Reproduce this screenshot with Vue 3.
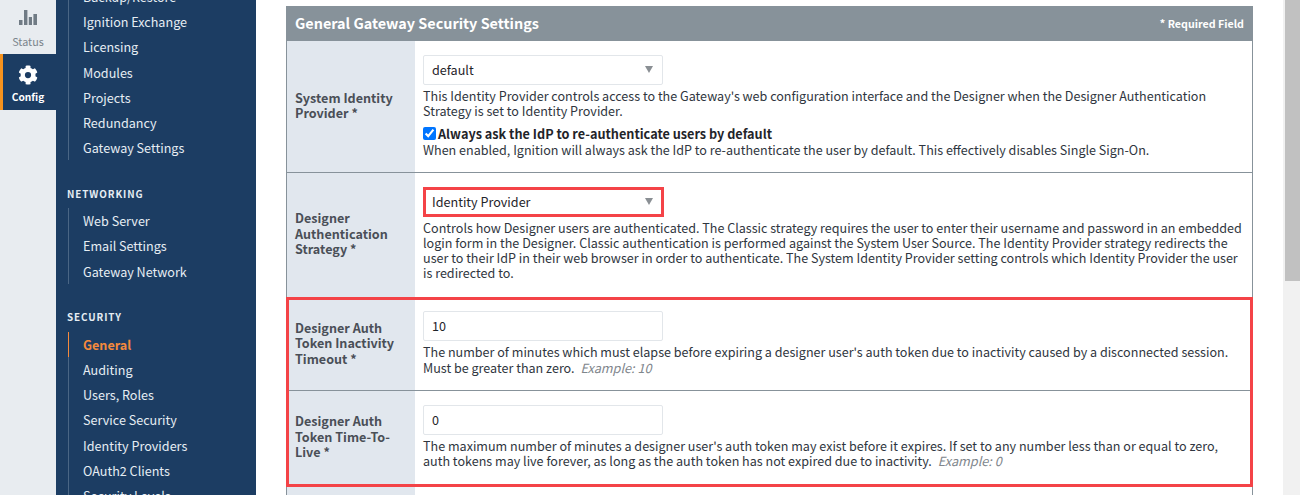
<script setup>
const groups = [
  { title: null, shift: true, items: ['Backup/Restore', 'Ignition Exchange', 'Licensing', 'Modules', 'Projects', 'Redundancy', 'Gateway Settings'] },
  { title: 'NETWORKING', items: ['Web Server', 'Email Settings', 'Gateway Network'] },
  { title: 'SECURITY', items: ['General', 'Auditing', 'Users, Roles', 'Service Security', 'Identity Providers', 'OAuth2 Clients', 'Security Levels'] },
]
</script>

<template>
  <div class="page">
    <aside class="rail">
      <a class="rail-item">
        <svg class="rail-icon" width="18" height="15" viewBox="0 0 18 15"><path d="M0 10h3.5v5H0zM5 0h3.4v15H5zM9.8 7h3.2v8H9.8zM14.4 4H18v11h-3.6z" fill="#707b85"/></svg>
        <span>Status</span>
      </a>
      <a class="rail-item active">
        <svg class="rail-icon" width="20" height="20" viewBox="0 0 512 512"><path fill="#fff" d="M487 316l-42-25a192 192 0 0 0 0-70l42-25c5-3 7-9 5-14-11-35-30-67-54-93-4-4-10-5-15-2l-42 24a188 188 0 0 0-61-35V28c0-6-4-10-9-11-36-8-73-8-107 0-5 1-9 5-9 11v48c-22 8-43 20-60 35L93 87c-5-3-11-2-15 2-24 26-43 58-54 93-2 5 0 11 5 14l42 25a192 192 0 0 0 0 70l-42 25c-5 3-7 9-5 14 11 35 30 67 54 93 4 4 10 5 15 2l42-24c17 15 38 27 60 35v48c0 6 4 10 9 11 36 8 73 8 107 0 5-1 9-5 9-11v-48c22-8 43-20 61-35l42 24c5 3 11 2 15-2 24-26 43-58 54-93 2-5 0-11-5-14zM256 336a80 80 0 1 1 0-160 80 80 0 0 1 0 160z"/></svg>
        <span>Config</span>
      </a>
    </aside>

    <nav class="side">
      <section v-for="g in groups" :key="g.items[0]" class="group" :class="{ shifted: g.shift }">
        <h4 v-if="g.title">{{ g.title }}</h4>
        <ul>
          <li v-for="it in g.items" :key="it" :class="{ current: it === 'General' }">{{ it }}</li>
        </ul>
      </section>
    </nav>

    <main class="main">
      <div class="panel">
        <header class="panel-head">
          <h2>General Gateway Security Settings</h2>
          <span>* Required Field</span>
        </header>

        <div class="row r1">
          <div class="label">System Identity Provider *</div>
          <div class="cell">
            <div class="select-wrap">
              <select><option>default</option></select>
              <i class="caret"></i>
            </div>
            <p class="help">This Identity Provider controls access to the Gateway's web configuration interface and the Designer when the Designer Authentication Strategy is set to Identity Provider.</p>
            <label class="check"><input type="checkbox" checked /> <b>Always ask the IdP to re-authenticate users by default</b></label>
            <p class="help">When enabled, Ignition will always ask the IdP to re-authenticate the user by default. This effectively disables Single Sign-On.</p>
          </div>
        </div>

        <div class="row r2">
          <div class="label">Designer Authentication Strategy *</div>
          <div class="cell">
            <div class="select-wrap marked">
              <select><option>Identity Provider</option></select>
              <i class="caret"></i>
            </div>
            <p class="help">Controls how Designer users are authenticated. The Classic strategy requires the user to enter their username and password in an embedded login form in the Designer. Classic authentication is performed against the System User Source. The Identity Provider strategy redirects the user to their IdP in their web browser in order to authenticate. The System Identity Provider setting controls which Identity Provider the user is redirected to.</p>
          </div>
        </div>

        <div class="row r3">
          <div class="label">Designer Auth Token Inactivity Timeout *</div>
          <div class="cell">
            <input class="field" type="text" value="10" />
            <p class="help">The number of minutes which must elapse before expiring a designer user's auth token due to inactivity caused by a disconnected session. Must be greater than zero. <em>Example: 10</em></p>
          </div>
        </div>

        <div class="row r4">
          <div class="label">Designer Auth Token Time-To-Live *</div>
          <div class="cell">
            <input class="field" type="text" value="0" />
            <p class="help">The maximum number of minutes a designer user's auth token may exist before it expires. If set to any number less than or equal to zero, auth tokens may live forever, as long as the auth token has not expired due to inactivity. <em>Example: 0</em></p>
          </div>
        </div>

        <div class="row r5">
          <div class="label"></div>
          <div class="cell"></div>
        </div>

        <div class="callout"></div>
      </div>
    </main>

    <div class="scrollbar"><div class="thumb"></div></div>
  </div>
</template>

<style scoped>
.page {
  display: flex;
  width: 1300px;
  height: 495px;
  overflow: hidden;
  background: #fff;
  font-family: "Noto Sans CJK SC", "Noto Sans", sans-serif;
  font-size: 12.6px;
  color: #2f3640;
}

.rail {
  flex: 0 0 56px;
  background: #e8ecf0;
  display: flex;
  flex-direction: column;
}
.rail-item {
  height: 56px;
  display: flex;
  flex-direction: column;
  align-items: center;
  color: #7b858c;
  font-size: 10.8px;
  line-height: 16px;
  padding-top: 10px;
  box-sizing: border-box;
}
.rail-item:first-child { height: 54px; }
.rail-icon { display: block; margin-bottom: 8px; }
.rail-item.active {
  background: #1c3d63;
  color: #fff;
  font-weight: 700;
  font-size: 10.2px;
  box-shadow: inset 3px 0 0 #f7931e;
  padding-top: 11px;
}
.rail-item.active .rail-icon { margin-bottom: 4px; }

.side {
  flex: 0 0 200px;
  background: #1c3d63;
  color: #e6edf3;
}
.group { padding: 0 0 0 11px; }
.group.shifted { margin-top: -16px; }
.group h4 {
  margin: 25.2px 0 6.8px;
  font-size: 9.9px;
  line-height: 16px;
  font-weight: 700;
  letter-spacing: 0.9px;
  color: #e6edf3;
}
.group ul {
  list-style: none;
  margin: 0;
  padding: 0 0 0 1px;
}
.group li {
  height: 25.2px;
  line-height: 25.2px;
  padding-left: 14px;
  border-left: 1px solid #4a6685;
}
.group li.current {
  color: #f58a3c;
  font-weight: 700;
  border-left-color: #f58a3c;
}

.main {
  flex: 1;
  padding: 6px 30px 0;
  min-width: 0;
}
.panel { position: relative; }
.panel-head {
  height: 35px;
  background: #87929a;
  color: #fff;
  display: flex;
  align-items: center;
  justify-content: space-between;
  padding: 0 9px 2px;
  box-sizing: border-box;
}
.panel-head h2 {
  margin: 0;
  font-size: 14.4px;
  font-weight: 700;
}
.panel-head span {
  font-size: 10.7px;
  font-weight: 700;
  padding-top: 2px;
}

.row {
  display: grid;
  grid-template-columns: 128px 1fr;
  border-left: 1px solid #87929a;
  border-right: 1px solid #87929a;
  border-bottom: 1px solid #87929a;
}
.label {
  background: #e1e7ee;
  display: flex;
  align-items: center;
  padding: 0 8px 3px;
  font-weight: 700;
  line-height: 15.4px;
  color: #4a4f57;
}
.cell { padding: 14px 8px 0; min-width: 0; }
.r1 { height: 131px; }
.r2 { height: 124px; }
.r3 { height: 92px; }
.r3 .label { padding-bottom: 2px; }
.r3 .cell { padding-top: 13px; }
.r3 .help { line-height: 15.6px; }
.r4 { height: 94px; }
.r4 .cell { padding-top: 14px; }
.r5 { height: 40px; border-bottom: 0; }

.select-wrap {
  position: relative;
  width: 240px;
  height: 30px;
}
select, .field {
  display: block;
  box-sizing: border-box;
  width: 240px;
  height: 30px;
  border: 1px solid #e2e6ea;
  border-radius: 2px;
  background: #fff;
  font: inherit;
  color: #1f2429;
  padding: 0 8px 2px;
  appearance: none;
  outline: none;
}
.caret {
  position: absolute;
  right: 10px;
  top: 11px;
  width: 0;
  height: 0;
  border-left: 4px solid transparent;
  border-right: 4px solid transparent;
  border-top: 7px solid #8a8f94;
}
.marked::after {
  content: "";
  position: absolute;
  inset: 0 -1px 0 0;
  border: 3px solid #f44347;
  pointer-events: none;
}

.help {
  margin: 3px 0 0;
  line-height: 15px;
  font-size: 12.57px;
  color: #2f3640;
}
.help em {
  color: #80868c;
  margin-left: 3px;
  font-size: 12.7px;
}
.check {
  display: flex;
  align-items: center;
  gap: 0;
  margin-top: 8px;
  line-height: 15px;
  font-size: 12.68px;
  color: #1f2429;
}
.check input {
  width: 13px;
  height: 13px;
  margin: 0 2px 0 0;
}
.check + .help { margin-top: 1px; }

.callout {
  position: absolute;
  left: 0;
  right: 0;
  top: 291px;
  height: 190px;
  box-sizing: border-box;
  border: 3px solid #f44347;
  pointer-events: none;
}

.scrollbar {
  flex: 0 0 17px;
  background: #f1f1f1;
  display: flex;
  justify-content: flex-end;
}
.thumb {
  width: 15px;
  height: 281px;
  background: #c1c1c1;
}
</style>
